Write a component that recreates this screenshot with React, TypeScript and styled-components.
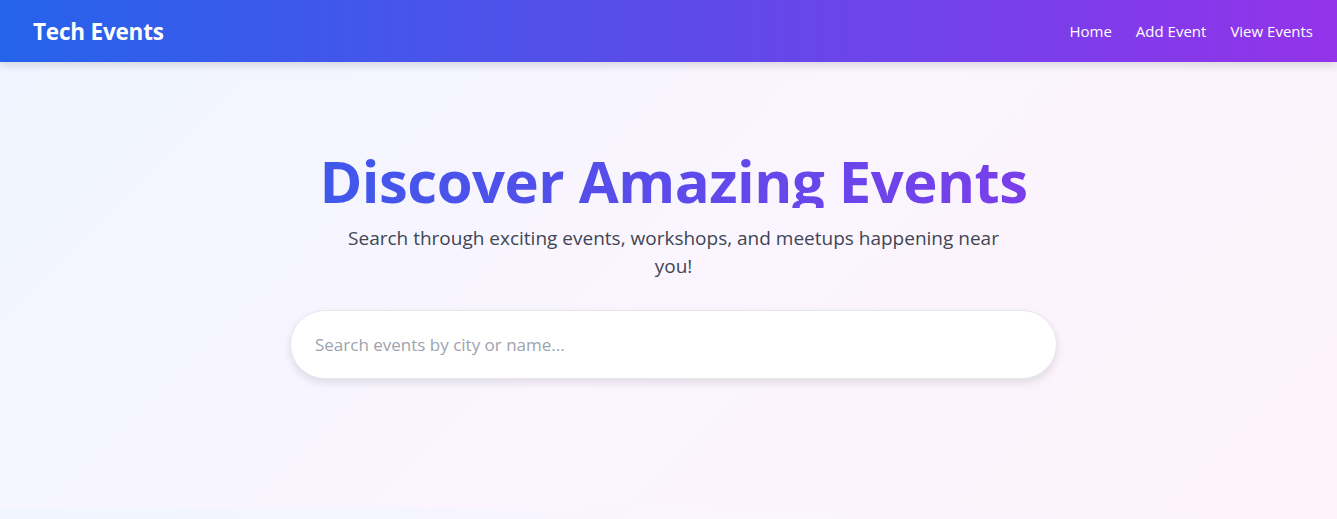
import React from "react";
import styled, { createGlobalStyle } from "styled-components";

const Global = createGlobalStyle`
  html, body { margin: 0; padding: 0; }
  body { font-family: "Open Sans", "Noto Sans", sans-serif; background: #f3f4ff; }
  * { box-sizing: border-box; }
`;

const Page = styled.div`
  min-height: 519px;
  display: flex;
  flex-direction: column;
  background: linear-gradient(135deg, #eff6ff 0%, #faf5ff 50%, #fdf2f8 100%);
`;

const NavBar = styled.nav`
  height: 62px;
  display: flex;
  align-items: center;
  justify-content: space-between;
  padding: 0 24px 0 33px;
  background: linear-gradient(to right, #2563eb, #9333ea);
  box-shadow: 0 4px 8px rgba(0, 0, 0, 0.12);
  position: relative;
  z-index: 1;
`;

const Brand = styled.div`
  color: #fff;
  font-weight: 700;
  font-size: 22.5px;
  letter-spacing: -0.2px;
`;

const NavLinks = styled.div`
  display: flex;
  gap: 24px;
`;

const NavLink = styled.a`
  color: #fff;
  font-size: 15px;
  text-decoration: none;
  cursor: pointer;
`;

const Hero = styled.section`
  height: 447px;
  display: flex;
  flex-direction: column;
  align-items: center;
  padding: 87px 0 0 10px;
`;

const Title = styled.h1`
  margin: 5px 0 0;
  align-self: stretch;
  text-align: center;
  font-size: 58px;
  font-weight: 700;
  line-height: 54px;
  letter-spacing: -0.5px;
  background: linear-gradient(to right, #2563eb, #9333ea);
  -webkit-background-clip: text;
  background-clip: text;
  color: transparent;
`;

const Subtitle = styled.p`
  margin: 16px 0 0;
  max-width: 660px;
  text-align: center;
  font-size: 19px;
  line-height: 28px;
  color: #3f4654;
`;

const SearchInput = styled.input`
  margin-top: 30px;
  width: 767px;
  height: 69px;
  border-radius: 999px;
  border: 1px solid #e5e7eb;
  background: #fff;
  padding: 0 24px;
  font-family: inherit;
  font-size: 17px;
  color: #374151;
  box-shadow: 0 4px 8px rgba(0, 0, 0, 0.1);
  outline: none;
  &::placeholder { color: #9ca3af; }
`;

const Footer = styled.div`
  flex: 1;
  background: linear-gradient(to right, #eff6ff, #faf5ff, #fdf2f8);
`;

export default function App() {
  return (
    <>
      <Global />
      <Page>
        <NavBar>
          <Brand>Tech Events</Brand>
          <NavLinks>
            <NavLink>Home</NavLink>
            <NavLink>Add Event</NavLink>
            <NavLink>View Events</NavLink>
          </NavLinks>
        </NavBar>
        <Hero>
          <Title>Discover Amazing Events</Title>
          <Subtitle>
            Search through exciting events, workshops, and meetups happening near you!
          </Subtitle>
          <SearchInput placeholder="Search events by city or name..." />
        </Hero>
        <Footer />
      </Page>
    </>
  );
}
